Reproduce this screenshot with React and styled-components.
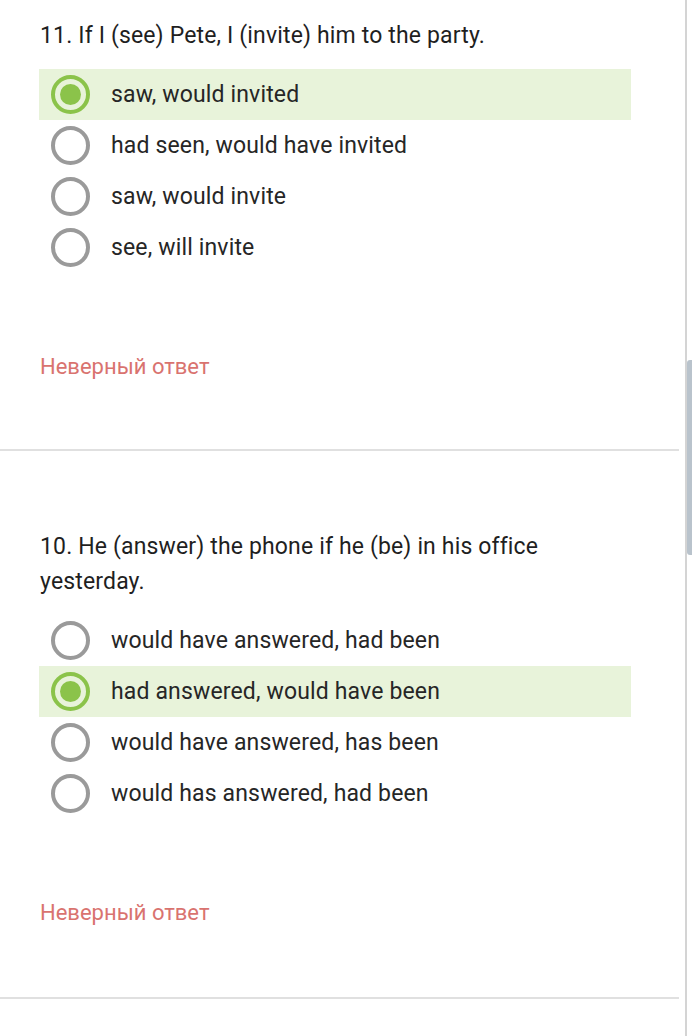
import React from 'react'
import styled, { createGlobalStyle } from 'styled-components'

const GlobalStyle = createGlobalStyle`
  html, body {
    margin: 0;
    padding: 0;
    background: #fff;
    font-family: Roboto, "Noto Sans", "Liberation Sans", sans-serif;
    color: #212121;
    overflow: hidden;
  }
`

const questions = [
  {
    id: 11,
    title: '11. If I (see) Pete, I (invite) him to the party.',
    options: ['saw, would invited', 'had seen, would have invited', 'saw, would invite', 'see, will invite'],
    chosen: 0,
    top: 18,
  },
  {
    id: 10,
    title: '10. He (answer) the phone if he (be) in his office yesterday.',
    options: [
      'would have answered, had been',
      'had answered, would have been',
      'would have answered, has been',
      'would has answered, had been',
    ],
    chosen: 1,
    top: 78,
  },
]

const App = () => {
  return (
    <Page>
      <GlobalStyle />
      {questions.map((q) => (
        <Question key={q.id} $top={q.top}>
          <Title>{q.title}</Title>
          <Options>
            {q.options.map((opt, i) => (
              <Option key={opt} $chosen={i === q.chosen}>
                <Radio $chosen={i === q.chosen} />
                <Label>{opt}</Label>
              </Option>
            ))}
          </Options>
          <Feedback>Неверный ответ</Feedback>
        </Question>
      ))}
      <Track>
        <Thumb />
      </Track>
    </Page>
  )
}

const Page = styled.main`
  width: 679px;
  min-height: 1036px;
`

const Question = styled.section`
  padding: ${({ $top }) => $top}px 48px 0 40px;
  height: ${({ $top }) => 449 - $top}px;
  border-bottom: 2px solid #e0e0e0;
  box-sizing: content-box;

  & + & {
    height: 468px;
  }
`

const Title = styled.h2`
  margin: 0;
  font-size: 23px;
  font-weight: 400;
  line-height: 35px;
  letter-spacing: 0.15px;
  color: #1f1f1f;
  width: 540px;
`

const Options = styled.div`
  margin: 16px 0 0 -1px;
  width: 592px;
  display: flex;
  flex-direction: column;
`

const Option = styled.div`
  height: 51px;
  display: flex;
  align-items: center;
  background: ${({ $chosen }) => ($chosen ? '#e8f3da' : 'transparent')};
`

const Radio = styled.span`
  box-sizing: border-box;
  width: 39px;
  height: 39px;
  margin: 0 21px 0 12px;
  border-radius: 50%;
  border: 4px solid ${({ $chosen }) => ($chosen ? '#8bc34a' : '#9a9a9a')};
  display: flex;
  align-items: center;
  justify-content: center;
  flex-shrink: 0;

  &::after {
    content: '';
    width: 21px;
    height: 21px;
    border-radius: 50%;
    background: #8bc34a;
    display: ${({ $chosen }) => ($chosen ? 'block' : 'none')};
  }
`

const Label = styled.span`
  font-size: 23px;
  letter-spacing: 0.15px;
  color: #262626;
`

const Feedback = styled.div`
  margin-top: 80px;
  font-size: 22px;
  line-height: 28px;
  color: #d9736f;
`

const Track = styled.div`
  position: fixed;
  top: 0;
  right: 0;
  width: 5px;
  height: 1036px;
  border-left: 2px solid #d4d4d4;
`

const Thumb = styled.div`
  margin-top: 360px;
  width: 5px;
  height: 195px;
  border-radius: 3px 0 0 3px;
  background: #b9c3cc;
`

export default App
